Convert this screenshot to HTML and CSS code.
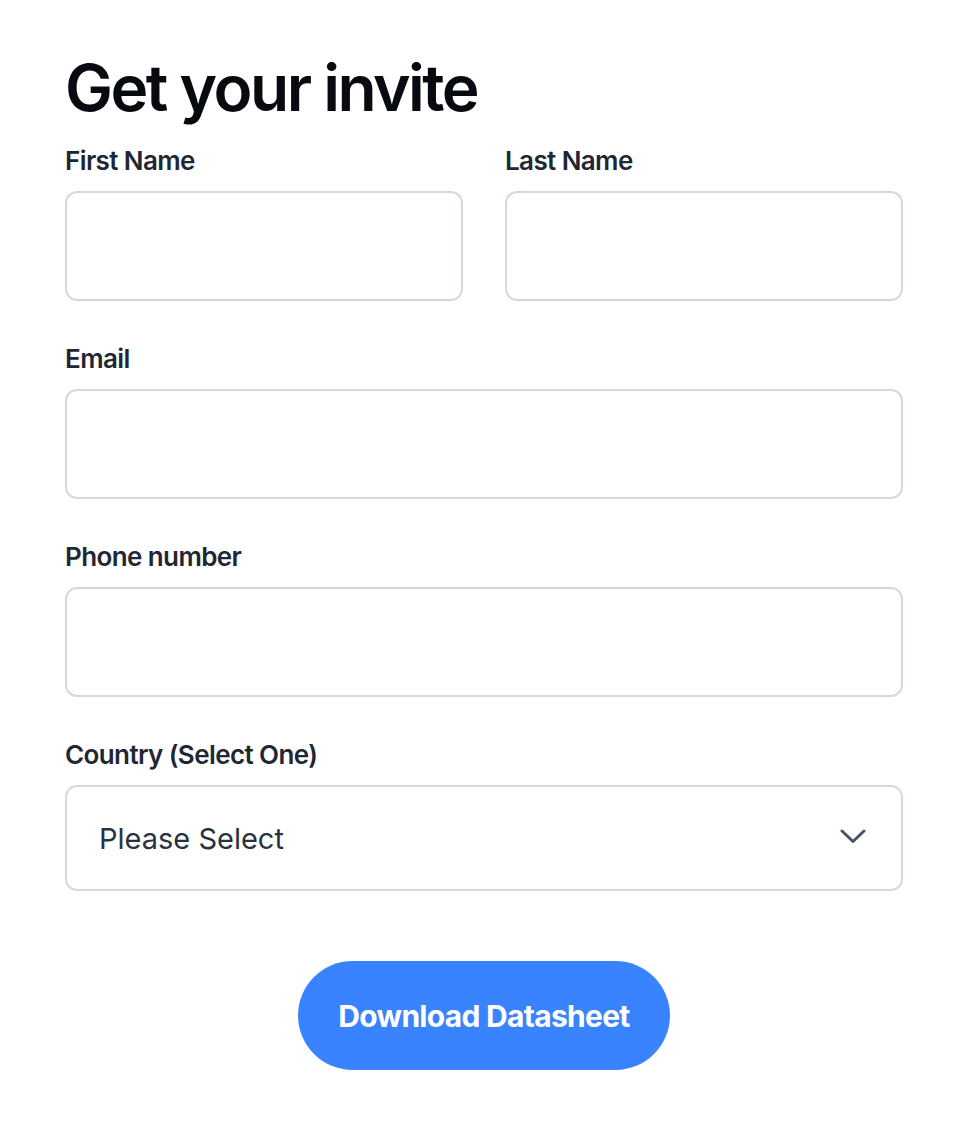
FILE: index.html
```html
<!DOCTYPE html>
<html>
<head>
<meta charset="UTF-8">
<meta name="viewport" content="width=device-width,user-scalable=no">
<title>Get your invite</title>
<link rel="stylesheet" href="styles.css">
</head>
<body>

<div class="wrap">
    <h1 class="title">Get your invite</h1>
    <form class="invite-form" onsubmit="return false;">
        <div class="row">
            <div class="field">
                <label for="first">First Name</label>
                <input type="text" id="first">
            </div>
            <div class="field">
                <label for="last">Last Name</label>
                <input type="text" id="last">
            </div>
        </div>
        <div class="field">
            <label for="email">Email</label>
            <input type="email" id="email">
        </div>
        <div class="field">
            <label for="phone">Phone number</label>
            <input type="tel" id="phone">
        </div>
        <div class="field">
            <label for="country">Country (Select One)</label>
            <div class="select">
                <select id="country">
                    <option>Please Select</option>
                </select>
                <svg class="chevron" width="26" height="15" viewBox="0 0 26 15">
                    <path d="M2 2 L13 12.5 L24 2" fill="none" stroke="#475569" stroke-width="3" stroke-linecap="round" stroke-linejoin="round"/>
                </svg>
            </div>
        </div>
        <div class="actions">
            <button type="submit" class="btn">Download Datasheet</button>
        </div>
    </form>
</div>

</body>
</html>
```

FILE: styles.css
```css
* {
    margin: 0;
    padding: 0;
    box-sizing: border-box;
}

body {
    background: #fff;
    font-family: Inter, "Noto Sans", "Liberation Sans", sans-serif;
    color: #1e2733;
}

.wrap {
    width: 838px;
    margin-left: 65px;
    padding-top: 49px;
}

.title {
    font-size: 64px;
    line-height: 77px;
    font-weight: 600;
    letter-spacing: -2.5px;
    color: #070a0f;
}

.invite-form {
    margin-top: 19px;
}

.row {
    display: grid;
    grid-template-columns: 1fr 1fr;
    gap: 42px;
}

.field {
    margin-bottom: 42px;
}

.field label {
    display: block;
    font-size: 26px;
    line-height: 32px;
    font-weight: 600;
    letter-spacing: -0.6px;
    color: #1e2733;
    margin-bottom: 14px;
}

.field input {
    display: block;
    width: 100%;
    height: 110px;
    border: 2px solid #d3d8e1;
    border-radius: 12px;
    background: #fff;
    outline: none;
    font-family: inherit;
    font-size: 28px;
    padding: 0 32px;
}

.select {
    position: relative;
}

.select select {
    display: block;
    width: 100%;
    height: 106px;
    border: 2px solid #d3d8e1;
    border-radius: 12px;
    background: #fff;
    appearance: none;
    -webkit-appearance: none;
    outline: none;
    font-family: inherit;
    font-size: 29px;
    color: #29323e;
    padding: 0 32px;
}

.chevron {
    position: absolute;
    right: 37px;
    top: 44px;
    pointer-events: none;
}

.actions {
    display: flex;
    justify-content: center;
    margin-top: -42px;
    padding-top: 70px;
}

.btn {
    height: 109px;
    padding: 0 40px;
    border: none;
    border-radius: 55px;
    background: #3a83fe;
    color: #fff;
    font-family: inherit;
    font-size: 30px;
    font-weight: 700;
    letter-spacing: -0.7px;
    cursor: pointer;
}
```
